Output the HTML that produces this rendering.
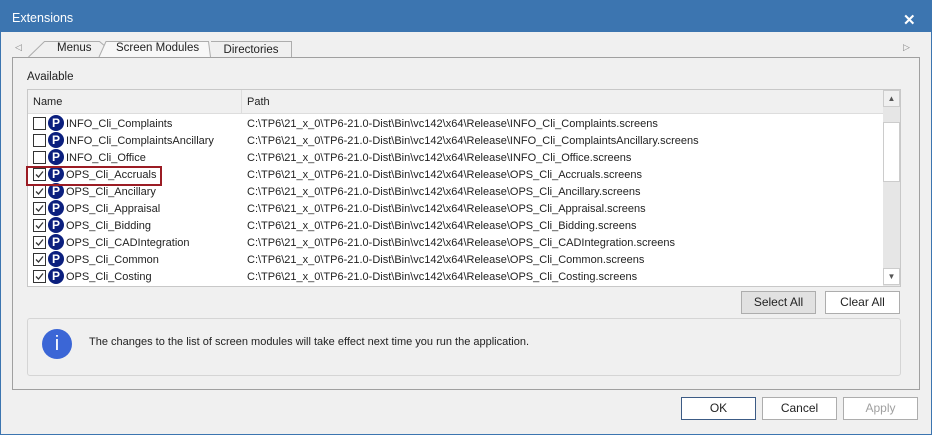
<html><head><style>
body{margin:0;width:932px;height:435px;background:#3c75b0;font-family:"Liberation Sans",sans-serif;font-size:12px;color:#222;position:relative;overflow:hidden}
.a{position:absolute}
.win{left:1px;top:32px;width:930px;height:402px;background:#f0f0f0}
.title{left:12px;top:11px;color:#fff;font-size:12.5px}
.tab{top:41px;height:16px;border:1px solid #adadad;border-bottom:none;background:#f0f0f0;text-align:center;line-height:16px;font-size:11.5px}
.grp{left:12px;top:57px;width:906px;height:331px;border:1px solid #a0a0a0}
.list{left:27px;top:89px;width:872px;height:196px;border:1px solid #c8c8c8;background:#fff;overflow:hidden;font-size:11px}
.hdr{left:0;top:0;width:855px;height:23px;background:#f0f0f0;border-bottom:1px solid #ddd}
.row{left:4px;height:17px;line-height:17px;width:850px}
.cb{position:absolute;left:1px;top:2px;width:11px;height:11px;border:1px solid #333;background:#fff}
.cb svg{position:absolute;left:0;top:0}
.p{position:absolute;left:16px;top:0;width:16px;height:16px;border-radius:50%;background:#0b1f7e;color:#fff;font-weight:bold;font-size:12px;text-align:center;line-height:16px}
.nm{position:absolute;left:34px;top:1px}
.pt{position:absolute;left:215px;top:1px}
.btn{height:21px;border:1px solid #adadad;background:#fff;text-align:center;line-height:21px}
</style></head><body>
<div class="a title">Extensions</div>
<div class="a" style="left:903px;top:11px;color:#fff;font-size:15px;font-weight:bold">✕</div>
<div class="a win"></div>
<div class="a" style="left:15px;top:42px;color:#888;font-size:9px">◁</div>
<div class="a" style="left:903px;top:42px;color:#888;font-size:9px">▷</div>
<svg class="a" style="left:0;top:0" width="120" height="60"><path d="M28.5 57L44.5 41.5H99.5L106 47" stroke="#adadad" fill="none"/></svg>
<div class="a" style="left:57px;top:42px;font-size:11.5px">Menus</div>
<svg class="a" style="left:0;top:0" width="300" height="60"><path d="M99 57L106 41.5H208.5L210.5 57" stroke="#adadad" fill="#f7f7f7"/></svg>
<div class="a" style="left:116px;top:42px;font-size:11.5px">Screen Modules</div>
<div class="a tab" style="left:211px;width:80px;border-left:none">Directories</div>
<div class="a grp"></div>
<div class="a" style="left:27px;top:71px;font-size:11.5px">Available</div>
<div class="a list">
 <div class="a hdr"><span class="a" style="left:5px;top:6px">Name</span><span class="a" style="left:213px;top:0;height:23px;border-left:1px solid #ddd"></span><span class="a" style="left:219px;top:6px">Path</span></div>
 <div class="a" style="left:855px;top:0;width:17px;height:196px;background:#e6e6e6"></div>
 <div class="a" style="left:855px;top:0;width:15px;height:15px;border:1px solid #ccc;background:#f0f0f0;text-align:center;font-size:8px;line-height:15px;color:#555">▲</div>
 <div class="a" style="left:855px;top:32px;width:15px;height:58px;border:1px solid #ccc;background:#fff"></div>
 <div class="a" style="left:855px;top:178px;width:15px;height:15px;border:1px solid #ccc;background:#fff;text-align:center;font-size:8px;line-height:15px;color:#555">▼</div>
 <div class="a row" style="top:25px"><span class="cb"></span><span class="p">P</span><span class="nm">INFO_Cli_Complaints</span><span class="pt">C:\TP6\21_x_0\TP6-21.0-Dist\Bin\vc142\x64\Release\INFO_Cli_Complaints.screens</span></div>
 <div class="a row" style="top:42px"><span class="cb"></span><span class="p">P</span><span class="nm">INFO_Cli_ComplaintsAncillary</span><span class="pt">C:\TP6\21_x_0\TP6-21.0-Dist\Bin\vc142\x64\Release\INFO_Cli_ComplaintsAncillary.screens</span></div>
 <div class="a row" style="top:59px"><span class="cb"></span><span class="p">P</span><span class="nm">INFO_Cli_Office</span><span class="pt">C:\TP6\21_x_0\TP6-21.0-Dist\Bin\vc142\x64\Release\INFO_Cli_Office.screens</span></div>
 <div class="a row" style="top:76px"><span class="cb"><svg width="11" height="11"><path d="M2 5.5L4.5 8L9 2.5" stroke="#333" stroke-width="1.3" fill="none"/></svg></span><span class="p">P</span><span class="nm">OPS_Cli_Accruals</span><span class="pt">C:\TP6\21_x_0\TP6-21.0-Dist\Bin\vc142\x64\Release\OPS_Cli_Accruals.screens</span></div>
 <div class="a row" style="top:93px"><span class="cb"><svg width="11" height="11"><path d="M2 5.5L4.5 8L9 2.5" stroke="#333" stroke-width="1.3" fill="none"/></svg></span><span class="p">P</span><span class="nm">OPS_Cli_Ancillary</span><span class="pt">C:\TP6\21_x_0\TP6-21.0-Dist\Bin\vc142\x64\Release\OPS_Cli_Ancillary.screens</span></div>
 <div class="a row" style="top:110px"><span class="cb"><svg width="11" height="11"><path d="M2 5.5L4.5 8L9 2.5" stroke="#333" stroke-width="1.3" fill="none"/></svg></span><span class="p">P</span><span class="nm">OPS_Cli_Appraisal</span><span class="pt">C:\TP6\21_x_0\TP6-21.0-Dist\Bin\vc142\x64\Release\OPS_Cli_Appraisal.screens</span></div>
 <div class="a row" style="top:127px"><span class="cb"><svg width="11" height="11"><path d="M2 5.5L4.5 8L9 2.5" stroke="#333" stroke-width="1.3" fill="none"/></svg></span><span class="p">P</span><span class="nm">OPS_Cli_Bidding</span><span class="pt">C:\TP6\21_x_0\TP6-21.0-Dist\Bin\vc142\x64\Release\OPS_Cli_Bidding.screens</span></div>
 <div class="a row" style="top:144px"><span class="cb"><svg width="11" height="11"><path d="M2 5.5L4.5 8L9 2.5" stroke="#333" stroke-width="1.3" fill="none"/></svg></span><span class="p">P</span><span class="nm">OPS_Cli_CADIntegration</span><span class="pt">C:\TP6\21_x_0\TP6-21.0-Dist\Bin\vc142\x64\Release\OPS_Cli_CADIntegration.screens</span></div>
 <div class="a row" style="top:161px"><span class="cb"><svg width="11" height="11"><path d="M2 5.5L4.5 8L9 2.5" stroke="#333" stroke-width="1.3" fill="none"/></svg></span><span class="p">P</span><span class="nm">OPS_Cli_Common</span><span class="pt">C:\TP6\21_x_0\TP6-21.0-Dist\Bin\vc142\x64\Release\OPS_Cli_Common.screens</span></div>
 <div class="a row" style="top:178px"><span class="cb"><svg width="11" height="11"><path d="M2 5.5L4.5 8L9 2.5" stroke="#333" stroke-width="1.3" fill="none"/></svg></span><span class="p">P</span><span class="nm">OPS_Cli_Costing</span><span class="pt">C:\TP6\21_x_0\TP6-21.0-Dist\Bin\vc142\x64\Release\OPS_Cli_Costing.screens</span></div>
</div>
<div class="a" style="left:26px;top:166px;width:132px;height:16px;border:2px solid #9b1c24"></div>
<div class="a btn" style="left:741px;top:291px;width:73px;background:#e1e1e1">Select All</div>
<div class="a btn" style="left:825px;top:291px;width:73px">Clear All</div>
<div class="a" style="left:27px;top:318px;width:872px;height:56px;border:1px solid #d5d5d5;border-radius:3px"></div>
<div class="a" style="left:42px;top:329px;width:30px;height:30px;border-radius:50%;background:#3b66d6;color:#fff;text-align:center;line-height:30px;font-size:20px">i</div>
<div class="a" style="left:89px;top:336px;font-size:11px">The changes to the list of screen modules will take effect next time you run the application.</div>
<div class="a btn" style="left:681px;top:397px;width:73px;border-color:#3c5b85">OK</div>
<div class="a btn" style="left:762px;top:397px;width:73px">Cancel</div>
<div class="a btn" style="left:843px;top:397px;width:73px;color:#a0a0a0">Apply</div>
</body></html>
